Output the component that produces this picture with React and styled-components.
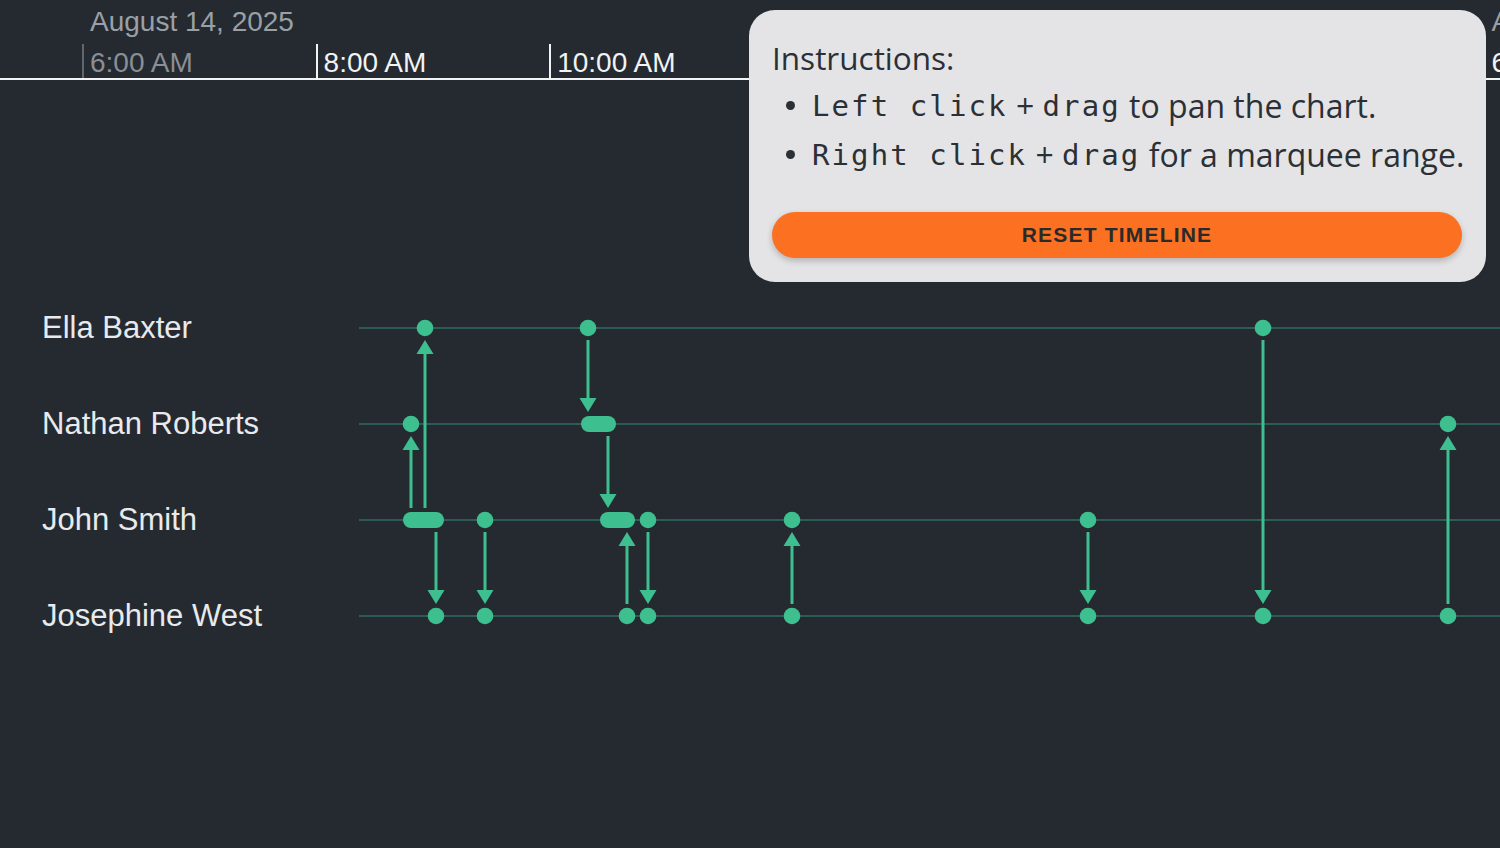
import React from 'react';
import styled, { createGlobalStyle } from 'styled-components';

const GREEN = '#3dbf8f';
const LANE = '#2d5c56';
const BG = '#252a31';

const GlobalStyle = createGlobalStyle`
  html, body {
    margin: 0;
    padding: 0;
    background: ${BG};
  }
  * {
    box-sizing: border-box;
  }
`;

const Page = styled.div`
  position: relative;
  width: 1500px;
  height: 848px;
  overflow: hidden;
  background: ${BG};
  font-family: 'Liberation Sans', Arial, sans-serif;
`;

const Axis = styled.div`
  display: flex;
  padding-left: 82px;
  border-bottom: 2px solid #f1f3f4;
  height: 80px;
`;

const TickColumn = styled.div`
  flex: 0 0 233.6px;
  display: flex;
  flex-direction: column;
`;

const DateLabel = styled.div`
  height: 46px;
  padding-left: 8px;
  font-size: 28px;
  line-height: 44px;
  color: #9aa0a6;
  white-space: nowrap;
`;

const TickMark = styled.div`
  flex: 1;
  border-left: 2px solid ${p => (p.dim ? '#62676d' : '#f1f3f4')};
  padding: 4px 0 0 6px;
  font-size: 28px;
  line-height: 30px;
  color: ${p => (p.dim ? '#8a8f95' : '#f1f3f4')};
  white-space: nowrap;
`;

const Lanes = styled.div`
  display: flex;
  margin-top: 200px;
`;

const LabelColumn = styled.div`
  flex: 0 0 359px;
  display: flex;
  flex-direction: column;
`;

const LaneLabel = styled.div`
  height: 96px;
  display: flex;
  align-items: center;
  padding-left: 42px;
  font-size: 31px;
  color: #e8eaed;
`;

const Panel = styled.div`
  position: absolute;
  top: 10px;
  right: 14px;
  width: 737px;
  height: 272px;
  padding: 27px 24px 24px 23px;
  border-radius: 26px;
  background: #e4e4e6;
  color: #2b3036;
  font-family: 'Open Sans', 'Noto Sans', sans-serif;
  display: flex;
  flex-direction: column;
`;

const Title = styled.div`
  font-size: 31.5px;
  line-height: 42px;
`;

const List = styled.ul`
  list-style: none;
  margin: 2px 0 0;
  padding: 0;
`;

const Item = styled.li`
  display: flex;
  align-items: center;
  height: 49px;
  font-size: 32px;
  white-space: nowrap;
  &::before {
    content: '';
    width: 9px;
    height: 9px;
    border-radius: 50%;
    background: #2b3036;
    margin: 0 17px 0 14px;
    flex: none;
  }
`;

const Code = styled.span`
  font-family: 'DejaVu Sans Mono', 'Liberation Mono', monospace;
  font-size: 29px;
  letter-spacing: 2.1px;
  white-space: pre;
`;

const Plain = styled.span`
  white-space: pre;
`;

const ResetButton = styled.button`
  margin-top: auto;
  height: 46px;
  width: 100%;
  border: none;
  border-radius: 23px;
  background: #fb7021;
  color: #2a2a2a;
  font-family: 'Liberation Sans', Arial, sans-serif;
  font-weight: bold;
  font-size: 21px;
  letter-spacing: 1.2px;
  box-shadow: 0 3px 6px rgba(0, 0, 0, 0.22);
  cursor: pointer;
`;

const ticks = [
  { label: '6:00 AM', dim: true, date: 'August 14, 2025' },
  { label: '8:00 AM' },
  { label: '10:00 AM' },
  { label: '12:00 PM' },
  { label: '2:00 PM' },
  { label: '4:00 PM' },
  { label: '6:00 PM', date: 'August 14, 2025' },
];

const people = ['Ella Baxter', 'Nathan Roberts', 'John Smith', 'Josephine West'];
const laneY = [48, 144, 240, 336];

// x in chart coords, lane index
const dots = [
  [66, 0], [229, 0], [904, 0],
  [52, 1], [1089, 1],
  [126, 2], [289, 2], [433, 2], [729, 2],
  [77, 3], [126, 3], [268, 3], [289, 3], [433, 3], [729, 3], [904, 3], [1089, 3],
];

// x1, x2, lane
const pills = [
  [44, 85, 2],
  [222, 257, 1],
  [241, 276, 2],
];

// x, from lane, to lane
const arrows = [
  [52, 2, 1],
  [66, 2, 0],
  [77, 2, 3],
  [126, 2, 3],
  [229, 0, 1],
  [249, 1, 2],
  [268, 3, 2],
  [289, 2, 3],
  [433, 3, 2],
  [729, 2, 3],
  [904, 0, 3],
  [1089, 3, 1],
];

const Arrow = ({ x, from, to }) => {
  const y0 = laneY[from];
  const y1 = laneY[to];
  const dir = y1 > y0 ? 1 : -1;
  const start = y0 + dir * 12;
  const tip = y1 - dir * 12;
  const base = tip - dir * 14;
  return (
    <g>
      <line x1={x} y1={start} x2={x} y2={base} stroke={GREEN} strokeWidth="3" />
      <polygon points={`${x},${tip} ${x - 8.5},${base} ${x + 8.5},${base}`} fill={GREEN} />
    </g>
  );
};

const Chart = () => (
  <svg width="1141" height="384" viewBox="0 0 1141 384">
    {laneY.map(y => (
      <line key={y} x1="0" y1={y} x2="1141" y2={y} stroke={LANE} strokeWidth="2" />
    ))}
    {arrows.map(([x, f, t], i) => (
      <Arrow key={i} x={x} from={f} to={t} />
    ))}
    {dots.map(([x, l], i) => (
      <circle key={i} cx={x} cy={laneY[l]} r="8.3" fill={GREEN} />
    ))}
    {pills.map(([a, b, l], i) => (
      <rect key={i} x={a} y={laneY[l] - 8} width={b - a} height="16" rx="8" fill={GREEN} />
    ))}
  </svg>
);

const App = () => (
  <Page>
    <GlobalStyle />
    <Axis>
      {ticks.map(t => (
        <TickColumn key={t.label}>
          <DateLabel>{t.date || ''}</DateLabel>
          <TickMark dim={t.dim}>{t.label}</TickMark>
        </TickColumn>
      ))}
    </Axis>
    <Lanes>
      <LabelColumn>
        {people.map(p => (
          <LaneLabel key={p}>{p}</LaneLabel>
        ))}
      </LabelColumn>
      <Chart />
    </Lanes>
    <Panel>
      <Title>Instructions:</Title>
      <List>
        <Item>
          <Code>Left click</Code>
          <Plain> + </Plain>
          <Code>drag</Code>
          <Plain> to pan the chart.</Plain>
        </Item>
        <Item>
          <Code>Right click</Code>
          <Plain> + </Plain>
          <Code>drag</Code>
          <Plain> for a marquee range.</Plain>
        </Item>
      </List>
      <ResetButton>RESET TIMELINE</ResetButton>
    </Panel>
  </Page>
);

export default App;
